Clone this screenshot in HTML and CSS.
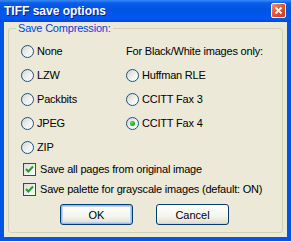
FILE: index.html
```html
<!DOCTYPE html>
<html lang="en">
<head>
    <meta charset="UTF-8">
    <title>TIFF save options</title>
    <link rel="stylesheet" href="styles.css">
</head>
<body>
    <div class="window">
        <div class="titlebar">
            <span class="title">TIFF save options</span>
            <span class="close">
                <svg width="13" height="13" viewBox="0 0 13 13">
                    <path d="M3.5 3.5 L9.5 9.5 M9.5 3.5 L3.5 9.5" stroke="#fff" stroke-width="1.8" fill="none"/>
                </svg>
            </span>
        </div>
        <div class="client">
            <fieldset class="group">
                <legend>Save Compression:</legend>
                <div class="options">
                    <label class="radio"><input type="radio" name="comp">None</label>
                    <div class="note">For Black/White images only:</div>
                    <label class="radio"><input type="radio" name="comp">LZW</label>
                    <label class="radio"><input type="radio" name="comp">Huffman RLE</label>
                    <label class="radio"><input type="radio" name="comp">Packbits</label>
                    <label class="radio"><input type="radio" name="comp">CCITT Fax 3</label>
                    <label class="radio"><input type="radio" name="comp">JPEG</label>
                    <label class="radio"><input type="radio" name="comp" checked>CCITT Fax 4</label>
                    <label class="radio"><input type="radio" name="comp">ZIP</label>
                </div>
                <label class="check">
                    <span class="box"><svg width="11" height="11" viewBox="0 0 11 11"><path d="M2 5 L4.3 7.5 L9 2.5" stroke="#21a121" stroke-width="2" fill="none"/></svg></span>
                    Save all pages from original image
                </label>
                <label class="check">
                    <span class="box"><svg width="11" height="11" viewBox="0 0 11 11"><path d="M2 5 L4.3 7.5 L9 2.5" stroke="#21a121" stroke-width="2" fill="none"/></svg></span>
                    Save palette for grayscale images (default: ON)
                </label>
                <div class="buttons">
                    <button type="button" class="default">OK</button>
                    <button type="button">Cancel</button>
                </div>
            </fieldset>
        </div>
    </div>
</body>
</html>
```

FILE: styles.css
```css
body {
    margin: 0;
    background-color: #fff;
    font-family: "Liberation Sans", Arial, sans-serif;
    font-size: 11px;
    letter-spacing: -0.2px;
}
.window {
    width: 291px;
    height: 241px;
    display: flex;
    flex-direction: column;
}
.titlebar {
    height: 22px;
    display: flex;
    align-items: center;
    justify-content: space-between;
    padding: 0 5px 0 4px;
    background: linear-gradient(to bottom, #3a8cf8 0, #0a5ce9 3px, #0054e3 45%, #0058ee 85%, #0047d8 100%);
}
.title {
    color: #fff;
    font-weight: bold;
    font-size: 12px;
    letter-spacing: 0;
    text-shadow: 1px 1px 0 #0a1e8c;
}
.close {
    width: 13px;
    height: 13px;
    display: flex;
    border: 1px solid #fff;
    border-radius: 2px;
    background: linear-gradient(135deg, #f09070 0, #e0552f 50%, #c8401c 100%);
    margin-top: -1px;
}
.client {
    flex: 1;
    background-color: #ece9d8;
    border: 4px solid #0055e5;
    border-top: none;
    padding: 0 4px 4px 4px;
    display: flex;
}
.group {
    flex: 1;
    margin: 0;
    padding: 2px 12px 3px 12px;
    border: 1px solid #d0d0bf;
    border-radius: 3px;
    display: flex;
    flex-direction: column;
}
.group legend {
    color: #0046d5;
    padding: 0 2px;
    margin-left: -5px;
    line-height: 13px;
}
.options {
    display: grid;
    grid-template-columns: 105px 1fr;
    grid-auto-rows: 24px;
    align-items: center;
    margin-top: 2px;
}
.radio {
    display: flex;
    align-items: center;
    gap: 3px;
}
.radio input {
    appearance: none;
    margin: 0;
    width: 13px;
    height: 13px;
    border: 1px solid #1c5180;
    border-radius: 50%;
    background: linear-gradient(135deg, #d4d4cc 0, #f4f4f0 60%, #fff 100%);
    display: flex;
    align-items: center;
    justify-content: center;
}
.radio input:checked::after {
    content: "";
    width: 5px;
    height: 5px;
    border-radius: 50%;
    background: radial-gradient(circle at 35% 35%, #5cd85c, #21a121 70%);
}
.check {
    display: flex;
    align-items: center;
    gap: 4px;
    height: 20px;
    margin-left: 2px;
    white-space: nowrap;
}
.box {
    width: 11px;
    height: 11px;
    border: 1px solid #1c5180;
    background: linear-gradient(135deg, #dcdcd7 0, #fff 100%);
    display: flex;
}
.buttons {
    display: flex;
    gap: 23px;
    padding-left: 39px;
    margin-top: 5px;
}
button {
    width: 73px;
    height: 21px;
    padding: 0;
    font-family: inherit;
    font-size: 11px;
    letter-spacing: 0;
    color: #000;
    border: 1px solid #003c74;
    border-radius: 3px;
    background: linear-gradient(to bottom, #fff 0, #f4f4f0 60%, #e4e2d8 90%, #d6d0c5 100%);
}
button.default {
    box-shadow: inset 0 0 0 1px #9cb7e8, inset 0 0 0 2px #bcd4f6;
}
```
